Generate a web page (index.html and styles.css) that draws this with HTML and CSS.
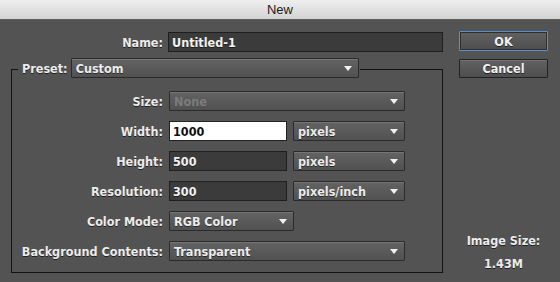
FILE: index.html
```html
<!DOCTYPE html>
<html lang="en">
<head>
  <meta charset="UTF-8">
  <title>New</title>
  <link rel="stylesheet" href="styles.css">
</head>
<body>
  <!-- Window title -->
  <div class="titlebar">New</div>

  <div class="dialog">
    <!-- Left: name + preset group -->
    <div class="main">
      <div class="name-row">
        <span class="label label-name">Name:</span>
        <div class="field w-name">Untitled-1</div>
      </div>

      <div class="group">
        <div class="group-head">
          <span class="label">Preset:</span>
          <div class="select w-preset"><span>Custom</span></div>
        </div>

        <div class="rows">
          <div class="row">
            <span class="label">Size:</span>
            <div class="select disabled w-full"><span>None</span></div>
          </div>
          <div class="row">
            <span class="label">Width:</span>
            <div class="field white w-num">1000</div>
            <div class="select w-unit"><span>pixels</span></div>
          </div>
          <div class="row">
            <span class="label">Height:</span>
            <div class="field w-num">500</div>
            <div class="select w-unit"><span>pixels</span></div>
          </div>
          <div class="row">
            <span class="label">Resolution:</span>
            <div class="field w-num">300</div>
            <div class="select w-unit"><span>pixels/inch</span></div>
          </div>
          <div class="row">
            <span class="label">Color Mode:</span>
            <div class="select w-mode"><span>RGB Color</span></div>
          </div>
          <div class="row">
            <span class="label">Background Contents:</span>
            <div class="select w-full"><span>Transparent</span></div>
          </div>
        </div>
      </div>
    </div>

    <!-- Right: buttons + image size -->
    <div class="side">
      <button class="btn btn-ok">OK</button>
      <button class="btn btn-cancel">Cancel</button>
      <div class="image-size">
        <div>Image Size:</div>
        <div>1.43M</div>
      </div>
    </div>
  </div>
</body>
</html>
```

FILE: styles.css
```css
* {
  box-sizing: border-box;
}

html, body {
  margin: 0;
  padding: 0;
}

body {
  width: 560px;
  height: 282px;
  overflow: hidden;
  background: #535353;
  color: #ececec;
  font-family: "DejaVu Sans Condensed", "DejaVu Sans", sans-serif;
  font-weight: bold;
  font-size: 12.5px;
}

/* Title bar */
.titlebar {
  height: 20px;
  line-height: 19px;
  text-align: center;
  font-family: "Liberation Sans", Arial, sans-serif;
  font-weight: normal;
  font-size: 13px;
  color: #1c1c1c;
  background: linear-gradient(#efefef, #d3d3d3);
  border-bottom: 1px solid #5e5e5e;
}

.dialog {
  display: flex;
  height: 262px;
}

.main {
  width: 432px;
  margin-left: 11px;
  padding-top: 12px;
}

.label {
  text-shadow: 0 1px 0 rgba(0, 0, 0, 0.65);
  white-space: nowrap;
}

.name-row {
  display: flex;
  align-items: center;
  gap: 5px;
  height: 20px;
}

.label-name {
  width: 152px;
  text-align: right;
}

/* Preset group box */
.group {
  margin-top: 17px;
  border: 1px solid #141414;
  padding-bottom: 11px;
}

.group-head {
  display: flex;
  align-items: center;
  gap: 3px;
  width: max-content;
  margin: -12px 0 0 6px;
  padding: 0 1px 0 4px;
  background: #535353;
}

.rows {
  display: flex;
  flex-direction: column;
  gap: 10px;
  margin-top: 13px;
}

.row {
  display: flex;
  align-items: center;
  gap: 6px;
  height: 20px;
}

.row .label {
  width: 151px;
  text-align: right;
}

/* Inputs */
.field {
  height: 20px;
  display: flex;
  align-items: center;
  padding: 0 3px;
  background: #3b3b3b;
  border: 1px solid #1f1f1f;
  color: #f2f2f2;
  text-shadow: 0 1px 0 rgba(0, 0, 0, 0.5);
}

.field.white {
  background: #ffffff;
  color: #111111;
  text-shadow: none;
  border-color: #222222;
}

.select {
  height: 20px;
  display: flex;
  align-items: center;
  padding: 0 6px 0 4px;
  background: linear-gradient(#636363, #515151);
  border: 1px solid #2b2b2b;
  border-radius: 1px;
  box-shadow: inset 0 1px 0 rgba(255, 255, 255, 0.12);
  text-shadow: 0 1px 0 rgba(0, 0, 0, 0.55);
}

.select::after {
  content: "";
  margin-left: auto;
  border-left: 4px solid transparent;
  border-right: 4px solid transparent;
  border-top: 5px solid #f2f2f2;
}

.select.disabled {
  color: #7c7c7c;
  text-shadow: none;
}

.w-name { width: 275px; }
.w-preset { width: 288px; }
.w-full { width: 236px; }
.w-num { width: 118px; }
.w-unit { width: 112px; }
.w-mode { width: 125px; }

/* Buttons column */
.side {
  display: flex;
  flex-direction: column;
  width: 105px;
  padding: 11px 0 7px 16px;
}

.btn {
  width: 89px;
  height: 20px;
  padding: 0;
  font: inherit;
  color: #f0f0f0;
  text-shadow: 0 1px 0 rgba(0, 0, 0, 0.65);
  background: linear-gradient(#616161, #4e4e4e);
  border: 1px solid #222222;
  border-radius: 1px;
  box-shadow: inset 0 1px 0 rgba(255, 255, 255, 0.12);
}

.btn-ok {
  border-color: #5b8fd4;
  box-shadow: inset 0 0 0 1px #2e2e2e;
}

.btn-cancel {
  height: 19px;
  margin-top: 8px;
}

.image-size {
  margin-top: auto;
  width: 89px;
  text-align: center;
  line-height: 23px;
  text-shadow: 0 1px 0 rgba(0, 0, 0, 0.65);
}
```
